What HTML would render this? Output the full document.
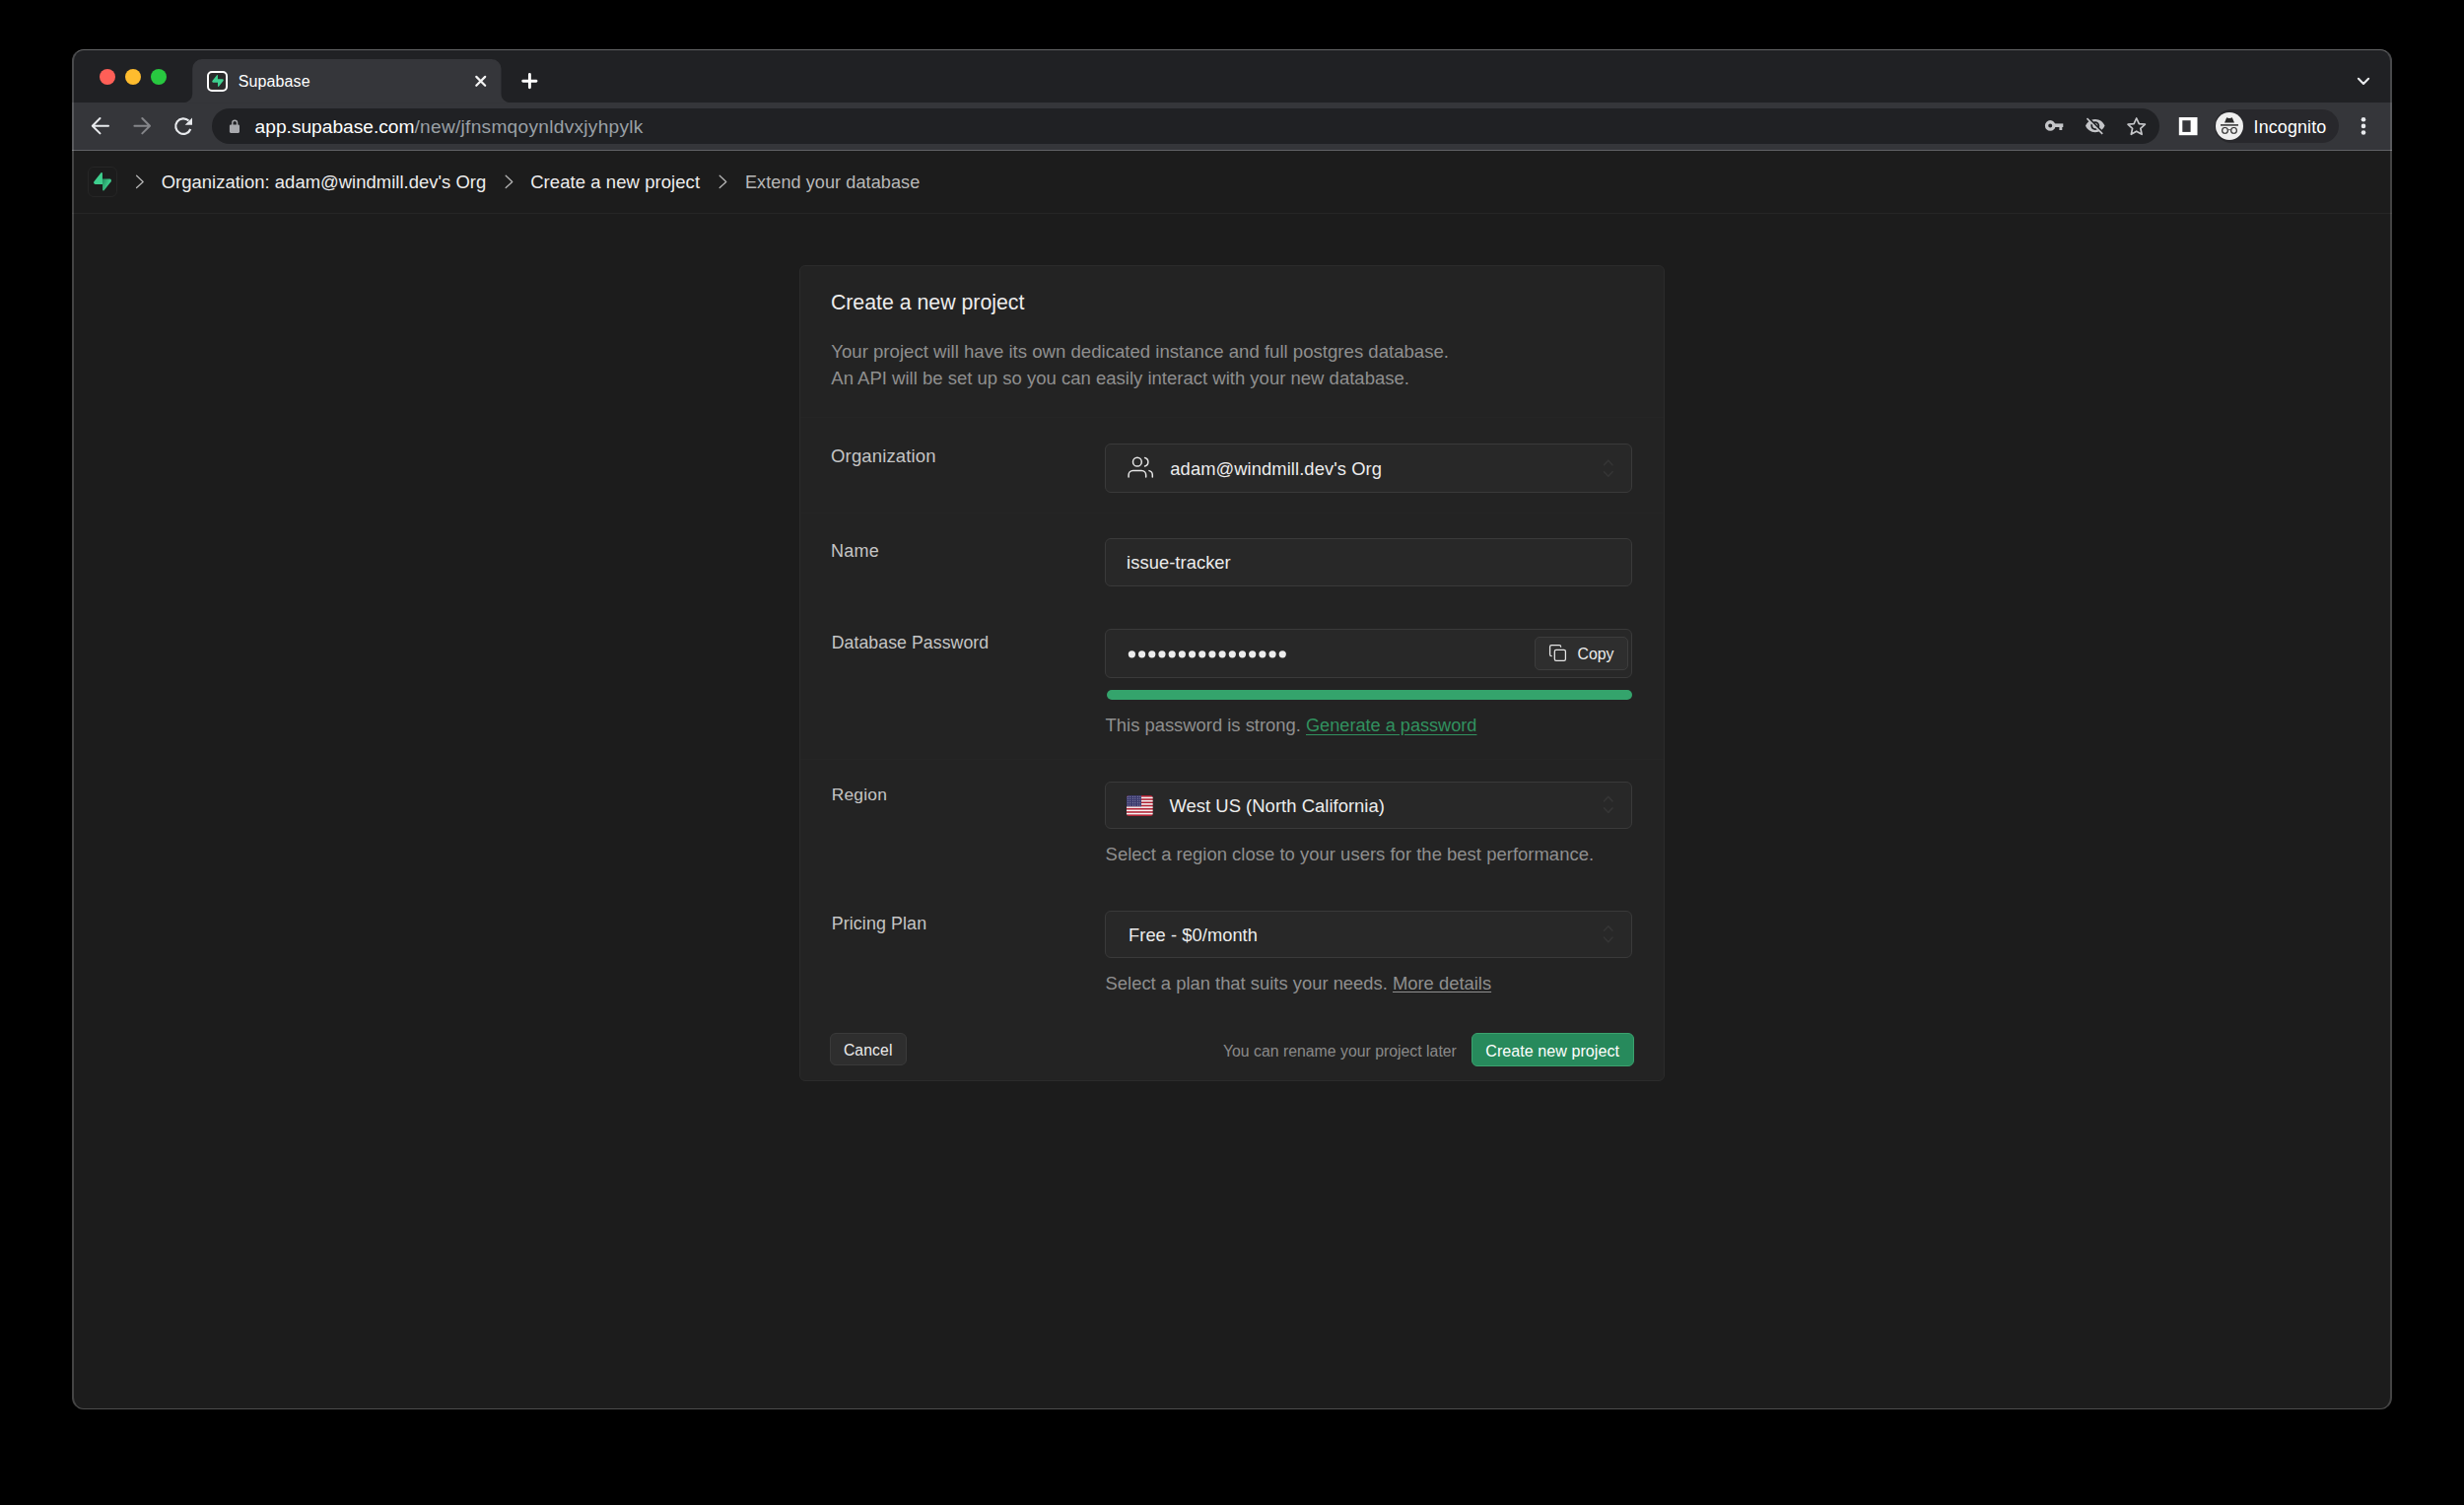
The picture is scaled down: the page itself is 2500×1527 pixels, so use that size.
<!DOCTYPE html>
<html><head><meta charset="utf-8"><title>Supabase</title><style>
*{margin:0;padding:0;box-sizing:border-box}
html,body{width:2500px;height:1527px;background:#000;overflow:hidden;font-family:"Liberation Sans", sans-serif}
.t{position:absolute;line-height:1;white-space:pre}
.abs{position:absolute}
svg{position:absolute;overflow:visible}
#win{position:absolute;left:73px;top:50px;width:2354px;height:1380px;border-radius:12px;overflow:hidden;background:#1c1c1c}
#winborder{position:absolute;left:73px;top:50px;width:2354px;height:1380px;border-radius:12px;border:1px solid rgba(255,255,255,0.18);border-top-color:rgba(255,255,255,0.3);border-bottom-color:rgba(255,255,255,0.22);border-left-width:2px;border-right-width:2px;pointer-events:none}
</style></head><body>
<div id="win">
<div class="abs" style="left:-73px;top:-50px;width:2500px;height:1527px">
<div class="abs" style="left:73px;top:50px;width:2354px;height:54px;background:#202124"></div>
<div class="abs" style="left:73px;top:104px;width:2354px;height:48px;background:#35363a"></div>
<div class="abs" style="left:73px;top:151.5px;width:2354px;height:1.5px;background:#606165"></div>
<svg style="left:0;top:0" width="2500" height="160"><path d="M186 104.2 A9 9 0 0 0 195.2 95 L195.2 69.7 A9.6 9.6 0 0 1 204.8 60.1 L498.9 60.1 A9.6 9.6 0 0 1 508.5 69.7 L508.5 95 A9 9 0 0 0 517.7 104.2 Z" fill="#35363a"/></svg>
<div class="abs" style="left:100.5px;top:69.8px;width:16px;height:16px;border-radius:50%;background:#ff5f57"></div>
<div class="abs" style="left:126.7px;top:69.8px;width:16px;height:16px;border-radius:50%;background:#febc2e"></div>
<div class="abs" style="left:152.9px;top:69.8px;width:16px;height:16px;border-radius:50%;background:#28c840"></div>
<div class="abs" style="left:210.3px;top:71.7px;width:21px;height:21px;border:2.5px solid #fff;border-radius:5px;background:#2a2a2a"></div>
<svg style="left:215px;top:76px" width="12" height="12" viewBox="0 0 109 113"><path d="M63.7 110.3C60.8 113.9 55.1 111.9 55 107.3L54 40.1H99.2C107.4 40.1 112 49.5 106.9 55.9L63.7 110.3Z" fill="#3ecf8e"/><path d="M45.3 2.1C48.2 -1.5 54 .4 54 5L54.5 72.3H9.8C1.6 72.3 -2.9 62.8 2.2 56.4L45.3 2.1Z" fill="#3ecf8e"/></svg>
<div class="t" style="left:241.70px;top:74.66px;font-size:16px;color:#ffffff;letter-spacing:0.12px">Supabase</div>
<svg style="left:0;top:0" width="600" height="100"><path d="M483.3 77.9 L492.2 86.8 M492.2 77.9 L483.3 86.8" stroke="#f4f4f4" stroke-width="2.2" stroke-linecap="round"/><path d="M537.4 75.5 V88.8 M530.7 82.2 H544" stroke="#ffffff" stroke-width="2.9" stroke-linecap="round"/></svg>
<svg style="left:0;top:0" width="2500" height="100"><path d="M2392.9 79.8 L2398 85 L2403.1 79.8" stroke="#e8eaed" stroke-width="2.1" fill="none" stroke-linecap="round" stroke-linejoin="round"/></svg>
<svg style="left:0;top:0" width="220" height="160"><path d="M110 127.7 H94 M101.5 120 L93.8 127.7 L101.5 135.4" stroke="#e8eaed" stroke-width="2" fill="none" stroke-linecap="round" stroke-linejoin="round"/><path d="M136.4 127.7 H151.5 M144.3 120 L152 127.7 L144.3 135.4" stroke="#85868a" stroke-width="2" fill="none" stroke-linecap="round" stroke-linejoin="round"/><path d="M193.3 131 A7.8 7.8 0 1 1 191.5 122.5" stroke="#e8eaed" stroke-width="2.2" fill="none"/><path d="M195 119.5 V126.8 H187.7 Z" fill="#e8eaed"/></svg>
<div class="abs" style="left:214.5px;top:110px;width:1976.5px;height:36px;border-radius:18px;background:#202124"></div>
<svg style="left:0;top:0" width="260" height="160"><path d="M235.8 127 V124.6 A2.4 2.4 0 0 1 240.6 124.6 V127" stroke="#a8a9ad" stroke-width="1.4" fill="none"/><rect x="232.9" y="126.5" width="10.1" height="8.4" rx="1.3" fill="#a8a9ad"/></svg>
<div class="t" style="left:258.60px;top:119.27px;font-size:19.17px;color:#ffffff;">app.supabase.com<span style="color:#9aa0a6;letter-spacing:0.26px">/new/jfnsmqoynldvxjyhpylk</span></div>
<svg style="left:0;top:0" width="2500" height="160"><circle cx="2080.2" cy="127.4" r="3.65" stroke="#c4c5c8" stroke-width="3.3" fill="none"/><rect x="2083.6" y="125.4" width="9.7" height="3.6" fill="#c4c5c8"/><rect x="2089.4" y="128.5" width="2.9" height="3.5" fill="#c4c5c8"/><g transform="translate(2115.1 116.9) scale(0.89)"><path fill="#c4c5c8" d="M12 7c2.76 0 5 2.24 5 5 0 .65-.13 1.26-.36 1.83l2.92 2.92c1.51-1.26 2.7-2.89 3.43-4.75-1.730-4.39-6-7.5-11-7.5-1.4 0-2.74.25-3.98.7l2.16 2.16C10.74 7.13 11.35 7 12 7zM2 4.27l2.28 2.28.46.46C3.08 8.3 1.78 10.02 1 12c1.73 4.39 6 7.5 11 7.5 1.55 0 3.03-.3 4.38-.84l.42.42L19.73 22 21 20.73 3.27 3 2 4.27zM7.530 9.8l1.55 1.55c-.05.21-.08.43-.08.65 0 1.66 1.34 3 3 3 .22 0 .44-.03.65-.08l1.55 1.55c-.67.33-1.41.53-2.2.53-2.76 0-5-2.240-5-5 0-.79.2-1.53.53-2.2zm4.31-.78l3.15 3.15.02-.16c0-1.66-1.34-3-3-3l-.17.01z"/></g><path d="M2167.7 120 L2170.3 125.6 L2176.4 126.2 L2171.8 130.3 L2173.1 136.3 L2167.7 133.2 L2162.3 136.3 L2163.6 130.3 L2159 126.2 L2165.1 125.6 Z" stroke="#c4c5c8" stroke-width="1.7" fill="none" stroke-linejoin="round"/><rect x="2210.8" y="119" width="18.7" height="18.2" fill="#ffffff"/><rect x="2214.3" y="122.2" width="8.3" height="11.7" fill="#35363a"/></svg>
<div class="abs" style="left:2246.6px;top:110.7px;width:126px;height:34.4px;border-radius:17.2px;background:#28282c"></div>
<div class="abs" style="left:2247.8px;top:113.6px;width:28.6px;height:28.6px;border-radius:50%;background:#eeeeee"></div>
<svg style="left:0;top:0" width="2500" height="160"><path d="M2257 124.6 L2259.2 119.3 Q2262 120.5 2264.8 119.3 L2267 124.6 Z" fill="#2a2a2a"/><rect x="2253" y="126.1" width="18" height="1.6" fill="#3a3a3a"/><circle cx="2257.5" cy="132.4" r="2.85" stroke="#2a2a2a" stroke-width="1.15" fill="none"/><circle cx="2266.5" cy="132.4" r="2.85" stroke="#2a2a2a" stroke-width="1.15" fill="none"/><path d="M2260.2 131.7 H2263.8" stroke="#555" stroke-width="1"/><circle cx="2398" cy="121.3" r="2.3" fill="#e8eaed"/><circle cx="2398" cy="127.9" r="2.3" fill="#e8eaed"/><circle cx="2398" cy="134.5" r="2.3" fill="#e8eaed"/></svg>
<div class="t" style="left:2286.60px;top:121.05px;font-size:17.9px;color:#ffffff;letter-spacing:0.13px">Incognito</div>
<div class="abs" style="left:73px;top:215.5px;width:2354px;height:1.3px;background:#252525"></div>
<div class="abs" style="left:89.2px;top:169px;width:30.3px;height:30.5px;border:1.3px solid #262626;border-radius:6px;background:#1c1c1c"></div>
<svg style="left:95.4px;top:175.2px" width="18" height="18.6" viewBox="0 0 109 113"><defs><linearGradient id="g1" x1="53.97" y1="54.97" x2="94.16" y2="71.83" gradientUnits="userSpaceOnUse"><stop stop-color="#249361"/><stop offset="1" stop-color="#3ECF8E"/></linearGradient></defs><path d="M63.7076 110.284C60.8481 113.885 55.0502 111.912 54.9813 107.314L53.9738 40.0627L99.1935 40.0627C107.384 40.0627 111.952 49.5228 106.859 55.9374L63.7076 110.284Z" fill="url(#g1)"/><path d="M45.317 2.07103C48.1765 -1.53037 53.9745 0.442937 54.0434 5.04075L54.4849 72.2922H9.83113C1.64038 72.2922 -2.92775 62.8321 2.1655 56.4175L45.317 2.07103Z" fill="#3ECF8E"/></svg>
<svg style="left:0;top:0" width="1000" height="220"><path d="M138.6 178.3 L145.2 184.4 L138.6 190.5" stroke="#b4b4b4" stroke-width="1.3" fill="none" stroke-linecap="round" stroke-linejoin="round"/><path d="M513.2 178.3 L519.8000000000001 184.4 L513.2 190.5" stroke="#b4b4b4" stroke-width="1.3" fill="none" stroke-linecap="round" stroke-linejoin="round"/><path d="M730.2 178.3 L736.8000000000001 184.4 L730.2 190.5" stroke="#b4b4b4" stroke-width="1.3" fill="none" stroke-linecap="round" stroke-linejoin="round"/></svg>
<div class="t" style="left:163.70px;top:175.57px;font-size:18.46px;color:#ededed;letter-spacing:0.025px">Organization: adam@windmill.dev's Org</div>
<div class="t" style="left:538.20px;top:175.94px;font-size:18.5px;color:#ededed;letter-spacing:0.06px">Create a new project</div>
<div class="t" style="left:755.90px;top:176.28px;font-size:18.1px;color:#b8b8b8;letter-spacing:0.07px">Extend your database</div>
<div class="abs" style="left:811px;top:269px;width:878px;height:827.5px;border:1.3px solid #2b2b2b;border-radius:6px;background:#232323"></div>
<div class="abs" style="left:812.3px;top:423px;width:875.4px;height:1.3px;background:#252525"></div>
<div class="abs" style="left:812.3px;top:520px;width:875.4px;height:1.3px;background:#252525"></div>
<div class="abs" style="left:812.3px;top:770px;width:875.4px;height:1.3px;background:#252525"></div>
<div class="t" style="left:842.90px;top:297.17px;font-size:21.3px;color:#ededed;">Create a new project</div>
<div class="t" style="left:843.30px;top:348.46px;font-size:18.6px;color:#8f8f8f;">Your project will have its own dedicated instance and full postgres database.</div>
<div class="t" style="left:843.30px;top:374.72px;font-size:18.52px;color:#8f8f8f;">An API will be set up so you can easily interact with your new database.</div>
<div class="t" style="left:843.10px;top:454.44px;font-size:18.5px;color:#c5c5c5;letter-spacing:0.13px">Organization</div>
<div class="abs" style="left:1121.4px;top:450px;width:535px;height:50px;border:1.3px solid #3a3a3a;border-radius:6px;background:#282828"></div>
<svg style="left:1144.15px;top:461.45px" width="26.4" height="26.4" viewBox="0 0 24 24" fill="none" stroke="#e6e6e6" stroke-width="1.36" stroke-linecap="round" stroke-linejoin="round"><path d="M17 21v-2a4 4 0 0 0-4-4H5a4 4 0 0 0-4 4v2"/><circle cx="9" cy="7" r="4"/><path d="M23 21v-2a4 4 0 0 0-3-3.87"/><path d="M16 3.13a4 4 0 0 1 0 7.75"/></svg>
<div class="t" style="left:1187.30px;top:466.96px;font-size:18.36px;color:#ededed;letter-spacing:0.08px">adam@windmill.dev's Org</div>
<svg style="left:0;top:0" width="1700" height="1100"><path d="M1627.5 471.7 L1631.8 467.2 L1636 471.7 M1627.5 478.7 L1631.8 483.2 L1636 478.7" stroke="#353535" stroke-width="1.6" fill="none" stroke-linecap="round" stroke-linejoin="round"/></svg>
<div class="t" style="left:843.10px;top:550.36px;font-size:18px;color:#c5c5c5;letter-spacing:0.2px">Name</div>
<div class="abs" style="left:1121.4px;top:545.5px;width:535px;height:49px;border:1.3px solid #3a3a3a;border-radius:6px;background:#282828"></div>
<div class="t" style="left:1143.10px;top:561.88px;font-size:18.34px;color:#ededed;letter-spacing:0.06px">issue-tracker</div>
<div class="t" style="left:843.70px;top:643.62px;font-size:17.7px;color:#c5c5c5;letter-spacing:0.07px">Database Password</div>
<div class="abs" style="left:1121.4px;top:638.3px;width:535px;height:49.3px;border:1.3px solid #3a3a3a;border-radius:6px;background:#282828"></div>
<svg style="left:0;top:0" width="1700" height="700"><circle cx="1148.40" cy="663.8" r="3.6" fill="#ededed"/><circle cx="1158.59" cy="663.8" r="3.6" fill="#ededed"/><circle cx="1168.78" cy="663.8" r="3.6" fill="#ededed"/><circle cx="1178.97" cy="663.8" r="3.6" fill="#ededed"/><circle cx="1189.16" cy="663.8" r="3.6" fill="#ededed"/><circle cx="1199.35" cy="663.8" r="3.6" fill="#ededed"/><circle cx="1209.54" cy="663.8" r="3.6" fill="#ededed"/><circle cx="1219.73" cy="663.8" r="3.6" fill="#ededed"/><circle cx="1229.92" cy="663.8" r="3.6" fill="#ededed"/><circle cx="1240.11" cy="663.8" r="3.6" fill="#ededed"/><circle cx="1250.30" cy="663.8" r="3.6" fill="#ededed"/><circle cx="1260.49" cy="663.8" r="3.6" fill="#ededed"/><circle cx="1270.68" cy="663.8" r="3.6" fill="#ededed"/><circle cx="1280.87" cy="663.8" r="3.6" fill="#ededed"/><circle cx="1291.06" cy="663.8" r="3.6" fill="#ededed"/><circle cx="1301.25" cy="663.8" r="3.6" fill="#ededed"/></svg>
<div class="abs" style="left:1557.3px;top:646.2px;width:95px;height:33.6px;border:1.3px solid #3d3d3d;border-radius:5px;background:#2e2e2e"></div>
<svg style="left:1571.3px;top:653.2px" width="19" height="19" viewBox="0 0 24 24" fill="none" stroke="#e6e6e6" stroke-width="1.6" stroke-linecap="round" stroke-linejoin="round"><rect width="14" height="14" x="8" y="8" rx="2" ry="2"/><path d="M4 16c-1.1 0-2-.9-2-2V4c0-1.1.9-2 2-2h10c1.1 0 2 .9 2 2"/></svg>
<div class="t" style="left:1600.50px;top:655.98px;font-size:15.85px;color:#ededed;">Copy</div>
<div class="abs" style="left:1122.5px;top:699.6px;width:533px;height:10px;border-radius:5px;background:#34a46c"></div>
<div class="t" style="left:1121.60px;top:727.02px;font-size:18.4px;color:#8f8f8f;">This password is strong. <span style="color:#31915f;font-size:18.15px;text-decoration:underline;text-underline-offset:3px">Generate a password</span></div>
<div class="t" style="left:843.70px;top:798.47px;font-size:17.4px;color:#c5c5c5;letter-spacing:0.2px">Region</div>
<div class="abs" style="left:1121.4px;top:792.9px;width:535px;height:48.4px;border:1.3px solid #3a3a3a;border-radius:6px;background:#282828"></div>
<svg style="left:1143.1px;top:806.7px" width="26.8" height="21" viewBox="0 0 26.8 21"><defs><clipPath id="fc"><rect width="26.8" height="21" rx="2.5"/></clipPath></defs><g clip-path="url(#fc)"><rect width="26.8" height="21" fill="#b22234"/><rect y="1.61" width="26.8" height="1.615" fill="#f5f5f5"/><rect y="4.84" width="26.8" height="1.615" fill="#f5f5f5"/><rect y="8.07" width="26.8" height="1.615" fill="#f5f5f5"/><rect y="11.30" width="26.8" height="1.615" fill="#f5f5f5"/><rect y="14.54" width="26.8" height="1.615" fill="#f5f5f5"/><rect y="17.76" width="26.8" height="1.615" fill="#f5f5f5"/><rect width="15" height="11.3" fill="#3c3b6e"/><circle cx="1.30" cy="1.20" r="0.45" fill="#dde"/><circle cx="3.80" cy="1.20" r="0.45" fill="#dde"/><circle cx="6.30" cy="1.20" r="0.45" fill="#dde"/><circle cx="8.80" cy="1.20" r="0.45" fill="#dde"/><circle cx="11.30" cy="1.20" r="0.45" fill="#dde"/><circle cx="13.80" cy="1.20" r="0.45" fill="#dde"/><circle cx="1.30" cy="3.40" r="0.45" fill="#dde"/><circle cx="3.80" cy="3.40" r="0.45" fill="#dde"/><circle cx="6.30" cy="3.40" r="0.45" fill="#dde"/><circle cx="8.80" cy="3.40" r="0.45" fill="#dde"/><circle cx="11.30" cy="3.40" r="0.45" fill="#dde"/><circle cx="13.80" cy="3.40" r="0.45" fill="#dde"/><circle cx="1.30" cy="5.60" r="0.45" fill="#dde"/><circle cx="3.80" cy="5.60" r="0.45" fill="#dde"/><circle cx="6.30" cy="5.60" r="0.45" fill="#dde"/><circle cx="8.80" cy="5.60" r="0.45" fill="#dde"/><circle cx="11.30" cy="5.60" r="0.45" fill="#dde"/><circle cx="13.80" cy="5.60" r="0.45" fill="#dde"/><circle cx="1.30" cy="7.80" r="0.45" fill="#dde"/><circle cx="3.80" cy="7.80" r="0.45" fill="#dde"/><circle cx="6.30" cy="7.80" r="0.45" fill="#dde"/><circle cx="8.80" cy="7.80" r="0.45" fill="#dde"/><circle cx="11.30" cy="7.80" r="0.45" fill="#dde"/><circle cx="13.80" cy="7.80" r="0.45" fill="#dde"/><circle cx="1.30" cy="10.00" r="0.45" fill="#dde"/><circle cx="3.80" cy="10.00" r="0.45" fill="#dde"/><circle cx="6.30" cy="10.00" r="0.45" fill="#dde"/><circle cx="8.80" cy="10.00" r="0.45" fill="#dde"/><circle cx="11.30" cy="10.00" r="0.45" fill="#dde"/><circle cx="13.80" cy="10.00" r="0.45" fill="#dde"/></g></svg>
<div class="t" style="left:1186.40px;top:808.98px;font-size:18.45px;color:#ededed;letter-spacing:0.025px">West US (North California)</div>
<svg style="left:0;top:0" width="1700" height="1100"><path d="M1627.5 812.9 L1631.8 808.4 L1636 812.9 M1627.5 819.9 L1631.8 824.4 L1636 819.9" stroke="#353535" stroke-width="1.6" fill="none" stroke-linecap="round" stroke-linejoin="round"/></svg>
<div class="t" style="left:1121.60px;top:858.19px;font-size:18.44px;color:#8f8f8f;letter-spacing:0.025px">Select a region close to your users for the best performance.</div>
<div class="t" style="left:843.70px;top:928.78px;font-size:17.86px;color:#c5c5c5;letter-spacing:0.1px">Pricing Plan</div>
<div class="abs" style="left:1121.4px;top:923.6px;width:535px;height:48.4px;border:1.3px solid #3a3a3a;border-radius:6px;background:#282828"></div>
<div class="t" style="left:1145.00px;top:939.53px;font-size:18.27px;color:#ededed;letter-spacing:0.07px">Free - $0/month</div>
<svg style="left:0;top:0" width="1700" height="1100"><path d="M1627.5 944.2 L1631.8 939.7 L1636 944.2 M1627.5 951.2 L1631.8 955.7 L1636 951.2" stroke="#353535" stroke-width="1.6" fill="none" stroke-linecap="round" stroke-linejoin="round"/></svg>
<div class="t" style="left:1121.60px;top:988.72px;font-size:18.4px;color:#8f8f8f;">Select a plan that suits your needs. <span style="text-decoration:underline;text-underline-offset:2px">More details</span></div>
<div class="abs" style="left:842.4px;top:1047.6px;width:77.2px;height:33.2px;border:1.3px solid #3a3a3a;border-radius:6px;background:#2e2e2e"></div>
<div class="t" style="left:855.90px;top:1057.53px;font-size:15.68px;color:#ededed;letter-spacing:0.15px">Cancel</div>
<div class="t" style="left:1240.90px;top:1058.70px;font-size:15.83px;color:#8a8a8a;">You can rename your project later</div>
<div class="abs" style="left:1493.2px;top:1048.1px;width:164.4px;height:33.5px;border:1.3px solid #3ba26e;border-radius:6px;background:#278a5c"></div>
<div class="t" style="left:1507.30px;top:1058.49px;font-size:16.08px;color:#ffffff;letter-spacing:0.04px">Create new project</div>
</div>
</div>
<div id="winborder"></div>
</body></html>
